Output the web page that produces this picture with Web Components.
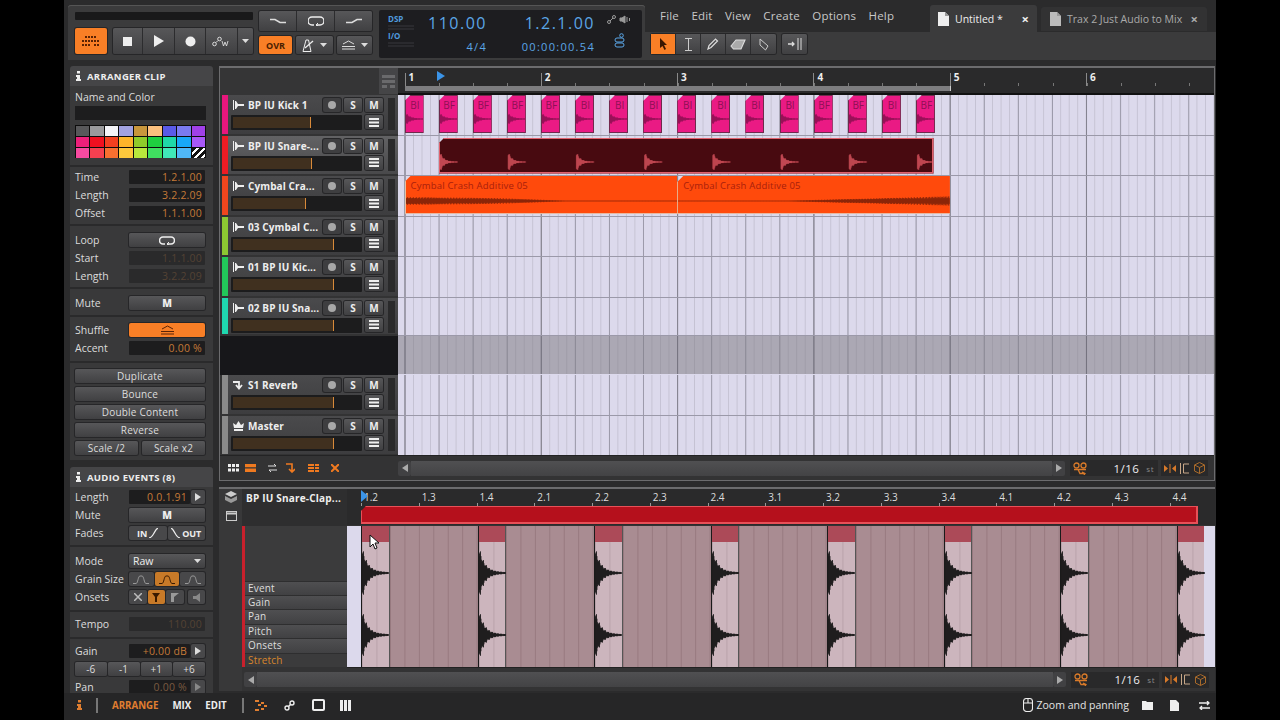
<!DOCTYPE html>
<html><head><meta charset="utf-8"><title>Bitwig</title>
<style>
html,body{margin:0;height:720px;overflow:hidden;background:#000;font-family:"Open Sans","Liberation Sans",sans-serif}
</style></head><body>
<daw-app>
  <daw-transport slot="transport"></daw-transport>
  <daw-menu slot="menu"></daw-menu>
  <daw-inspector slot="inspector">
    <insp-panel heading="ARRANGER CLIP">
      <insp-sec pad="2px 0 7px"><clip-color></clip-color></insp-sec>
      <insp-sec pad="1px 0 2px">
        <insp-row label="Time">1.2.1.00</insp-row><insp-row label="Length">3.2.2.09</insp-row><insp-row label="Offset">1.1.1.00</insp-row>
      </insp-sec>
      <insp-sec pad="5px 0 2px">
        <insp-row label="Loop" kind="btn"><svg width="16" height="9" viewBox="0 0 16 9" fill="none" stroke="#eee" stroke-width="1.6"><path d="M6 8H4a3.4 3.4 0 0 1 0-7h8a3.4 3.4 0 0 1 0 7H8"/><path d="M10 6l-2 2 2 1" stroke-width="1"/></svg></insp-row>
        <insp-row label="Start" kind="dim">1.1.1.00</insp-row><insp-row label="Length" kind="dim">3.2.2.09</insp-row>
      </insp-sec>
      <insp-sec pad="5px 0 3px"><insp-row label="Mute" kind="btn"><b>M</b></insp-row></insp-sec>
      <insp-sec pad="4px 0 4px">
        <insp-row label="Shuffle" kind="on"><svg width="15" height="10" viewBox="0 0 15 10" fill="none" stroke="#5a2408" stroke-width="1"><path d="M1 9h13M1 6.500h13M2 4l5.500-3L13 4"/></svg></insp-row>
        <insp-row label="Accent">0.00 %</insp-row>
      </insp-sec>
      <insp-sec pad="4px 0 3px">
        <insp-pair one><insp-action>Duplicate</insp-action></insp-pair><insp-pair one><insp-action>Bounce</insp-action></insp-pair><insp-pair one><insp-action>Double Content</insp-action></insp-pair><insp-pair one><insp-action>Reverse</insp-action></insp-pair>
        <insp-pair><insp-action>Scale /2</insp-action><insp-action>Scale x2</insp-action></insp-pair>
      </insp-sec>
    </insp-panel>
    <insp-panel heading="AUDIO EVENTS (8)">
      <insp-sec pad="1px 0 3px">
        <insp-row label="Length" kind="arrow">0.0.1.91</insp-row>
        <insp-row label="Mute" kind="btn"><b>M</b></insp-row>
        <insp-row label="Fades" kind="seg"><seg-btns items="fades"></seg-btns></insp-row>
      </insp-sec>
      <insp-sec pad="5px 0 4px">
        <insp-row label="Mode" kind="select">Raw</insp-row>
        <insp-row label="Grain Size" kind="seg"><seg-btns items="grain"></seg-btns></insp-row>
        <insp-row label="Onsets" kind="seg"><seg-btns items="onsets"></seg-btns></insp-row>
      </insp-sec>
      <insp-sec pad="3px 0 4px"><insp-row label="Tempo" kind="dim">110.00</insp-row></insp-sec>
      <insp-sec pad="3px 0 0">
        <insp-row label="Gain" kind="arrow">+0.00 dB</insp-row>
        <insp-pair four><insp-action>-6</insp-action><insp-action>-1</insp-action><insp-action>+1</insp-action><insp-action>+6</insp-action></insp-pair>
        <insp-row label="Pan" kind="arrowdim">0.00 %</insp-row>
      </insp-sec>
    </insp-panel>
  </daw-inspector>
  <daw-arranger slot="arranger">
    <track-row color="#e8177d" level="78" icon="wave" name="BP IU Kick 1"><kick-clips></kick-clips></track-row>
    <track-row color="#ee1c24" level="79" icon="wave" name="BP IU Snare-..." sel><snare-clip></snare-clip></track-row>
    <track-row color="#f0461e" level="73" icon="wave" name="Cymbal Cra..."><crash-clips></crash-clips></track-row>
    <track-row color="#8cc832" level="101" icon="wave" name="03 Cymbal C..."></track-row>
    <track-row color="#22c85a" level="101" icon="wave" name="01 BP IU Kic..."></track-row>
    <track-row color="#1fd8b0" level="101" icon="wave" name="02 BP IU Sna..." short></track-row>
    <track-row gap></track-row>
    <track-row color="#8a8a8a" level="101" icon="ret" name="S1 Reverb"></track-row>
    <track-row color="#8a8a8a" level="101" icon="crown" name="Master"></track-row>
  </daw-arranger>
  <daw-detail slot="detail"></daw-detail>
  <daw-status slot="status"></daw-status>
</daw-app>
<script>
const BTN=`background:linear-gradient(#575759,#404042);border-radius:2px;box-shadow:0 0 0 1px #262628;box-sizing:border-box;display:flex;align-items:center;justify-content:center;color:#eee;`;
const TXT=`font-family:"Open Sans","Liberation Sans",sans-serif;`;
function def(name,css,html){customElements.define(name,class extends HTMLElement{
  connectedCallback(){ if(this.shadowRoot) return; const r=this.attachShadow({mode:'open'});
    r.innerHTML=`<style>${css}</style>`+(typeof html==='function'?html(this):html); }
});}
const DD=`<svg width="7" height="4" viewBox="0 0 7 4"><path d="M0 0h7L3.500 4z" fill="#ddd"/></svg>`;
const DOC=c=>`<svg width="11" height="14" viewBox="0 0 11 14"><path d="M0 0h7l4 4v10H0z" fill="${c}"/><path d="M7 0v4h4z" fill="#999"/></svg>`;

def('daw-app',`:host{display:flex;flex-direction:column;width:1152px;height:720px;margin-left:64px;background:#2b2b2c;color:#eee;${TXT}font-size:11px}
 .h{display:flex;height:60px;flex:none}.m{display:flex;height:633px;flex:none;overflow:hidden}
 .c{display:flex;flex-direction:column;width:996px;margin:6px 0 0 6px;gap:6px}`,
 `<div class="h"><slot name="transport"></slot><slot name="menu"></slot></div>
  <div class="m"><slot name="inspector"></slot><div class="c"><slot name="arranger"></slot><slot name="detail"></slot></div></div>
  <slot name="status"></slot>`);

def('daw-transport',`:host{display:flex;width:577px;height:55px;margin:5px 0 0 4px;background:#3b3b3c;border-radius:3px 3px 0 0;box-shadow:inset 0 1px #555}
 .a{width:178px;margin:7px 0 0 7px}.slot{height:8px;background:#19191a;border-radius:1px}
 .r{display:flex;margin-top:8px;height:26px}
 .org{${BTN}width:32px;height:26px;background:#f97f26;margin-right:6px}
 .g{display:flex;flex:1;${BTN}justify-content:flex-start}
 .g i{display:flex;align-items:center;justify-content:center;height:100%;border-right:1px solid #2c2c2e;box-sizing:border-box}
 .b{width:113px;margin:6px 0 0 6px}.t{display:flex;height:20px;${BTN}justify-content:flex-start}
 .t i{flex:1;display:flex;align-items:center;justify-content:center;height:100%;border-right:1px solid #2c2c2e}
 .u{display:flex;margin-top:5px;height:18px;gap:4px}
 .ovr{${BTN}background:#f97f26;width:33px;font:700 9px "Open Sans";color:#4a1d00}
 .dd{${BTN}display:flex;justify-content:space-evenly}
 .d{display:flex;width:263px;height:48px;margin:5px 0 0 7px;background:#1d1d20;border-radius:2px;color:#5ba6e6;position:relative}
 .c1{width:38px;padding:4px 0 0 9px;box-sizing:border-box;font:700 8px/10px "Open Sans";color:#4f9adf}
 .c1 s{display:block;height:5px;width:26px;margin:1px 0;background:linear-gradient(#2a2a2e 2px,#1d1d20 2px,#1d1d20 3px,#2a2a2e 3px);text-decoration:none}
 .v{display:flex;flex-direction:column;align-items:flex-end;justify-content:flex-start}
 .big{font:400 16px/20px "Open Sans";letter-spacing:1.5px;margin-top:3px;height:22px}.sm{font:400 11px/14px "Open Sans";letter-spacing:1.3px;margin-top:5px}
 .ic{display:flex;flex-direction:column;margin-left:12px;gap:9px;padding-top:5px;align-items:center}`,
 `<div class="a"><div class="slot"></div><div class="r"><div class="org"><svg width="18" height="12" viewBox="0 0 18 12" fill="#5b2203"><path d="M3 1h2v2H3zM6 1h2v2H6zM9 1h2v2H9zM12 1h2v2h-2zM0 5h2v2H0zM3 5h2v2H3zM6 5h2v2H6zM9 5h2v2H9zM12 5h2v2h-2zM15 5h2v2h-2zM0 9h2v2H0zM3 9h2v2H3zM6 9h2v2H6zM12 9h2v2h-2zM15 9h2v2h-2z"/></svg></div>
  <div class="g"><i style="width:30px"><svg width="9" height="9"><rect width="9" height="9" fill="#eee"/></svg></i><i style="width:32px"><svg width="10" height="12"><path d="M0 0l10 6-10 6z" fill="#eee"/></svg></i><i style="width:31px"><svg width="11" height="11"><circle cx="5.500" cy="5.500" r="5" fill="#eee"/></svg></i>
  <i style="width:32px"><svg width="19" height="11" viewBox="0 0 19 11" fill="none" stroke="#ddd"><circle cx="2.500" cy="8" r="1.800"/><circle cx="7.500" cy="3" r="1.800"/><path d="M4 6.500L6 4.500"/><path d="M10 5l1.500 5 1.500-4 1.500 4 1.500-5" stroke-width=".9"/></svg></i><i style="flex:1;border:0">${DD}</i></div></div></div>
  <div class="b"><div class="t"><i><svg width="16" height="6"><path d="M0 1.500h5l5 3h6" stroke="#ddd" stroke-width="1.500" fill="none"/></svg></i><i><svg width="16" height="10" viewBox="0 0 16 10" fill="none" stroke="#eee" stroke-width="1.500"><path d="M6 9H4a3.700 3.700 0 0 1 0-8h8a3.700 3.700 0 0 1 0 8H8"/><path d="M10 7L8 9l2 1" stroke-width="1"/></svg></i><i style="border:0"><svg width="16" height="6"><path d="M0 4.500h6l5-3h5" stroke="#ddd" stroke-width="1.500" fill="none"/></svg></i></div>
  <div class="u"><div class="ovr">OVR</div><div class="dd" style="width:37px"><svg width="13" height="13" viewBox="0 0 13 13" fill="none" stroke="#eee"><path d="M1 12.500h8L6.500 1h-2.500z"/><path d="M3 9L11 2" stroke-width="1.300"/></svg>${DD}</div><div class="dd" style="width:35px"><svg width="15" height="10" viewBox="0 0 15 10" fill="none" stroke="#ddd"><path d="M1 9h13M1 6.500h13M2 4l5.500-3L13 4"/></svg>${DD}</div></div></div>
  <div class="d"><div class="c1">DSP<s></s>I/O<s></s></div>
   <div class="v" style="width:70px"><div class="big">110.00</div><div class="sm">4/4</div></div>
   <div class="v" style="width:108px"><div class="big">1.2.1.00</div><div class="sm">00:00:00.54</div></div>
   <div class="ic"><svg width="24" height="9" viewBox="0 0 24 9" fill="none" stroke="#9a9a9a"><circle cx="2" cy="7" r="1.500"/><circle cx="7" cy="2" r="1.500"/><path d="M3 6l3-3"/><path d="M13 3h2l3-2v7l-3-2h-2zM20 2v5M22.500 3v3" fill="#9a9a9a"/></svg>
   <svg width="11" height="15" viewBox="0 0 11 15" fill="none" stroke="#5ba6e6"><circle cx="7.500" cy="2.500" r="1.800"/><rect x="1" y="5" width="9" height="4" rx="2"/><rect x="1" y="10" width="9" height="4" rx="2"/></svg></div>
  </div>`);

def('daw-menu',`:host{display:flex;flex-direction:column;width:571px;height:60px}
 .top{display:flex;height:32px;box-sizing:border-box}
 .mi{display:flex;gap:12.400px;padding:9px 0 0 15px;width:285px;box-sizing:border-box;color:#c8c8c8;font:500 11.5px/14px "Open Sans";letter-spacing:.2px}
 .tab{display:flex;align-items:center;box-sizing:border-box;border-radius:3px 3px 0 0;font:500 10.5px "Open Sans"}
 .t1{width:107px;height:27px;margin-top:5px;background:#3b3b3c;color:#eee;padding:0 8px}.t2{width:166px;height:24px;margin:7px 0 0 4px;background:#323233;color:#aaa;padding:0 9px}
 .tab svg{margin-right:6px;flex:none}.x{margin-left:auto;font-weight:700;font-size:13px}
 .tl{flex:1;background:#3b3b3c;display:flex;padding:2px 0 0 6px;gap:6px;box-sizing:border-box}
 .g{display:flex;height:20px;${BTN}}.g i{width:25px;height:20px;display:flex;align-items:center;justify-content:center;border-right:1px solid #2c2c2e;box-sizing:border-box}
 .g i.on{background:#f97f26}`,
 `<div class="top"><div class="mi"><span>File</span><span>Edit</span><span>View</span><span>Create</span><span>Options</span><span>Help</span></div>
  <div class="tab t1">${DOC('#eee')}Untitled *<span class="x">×</span></div><div class="tab t2">${DOC('#bbb')}Trax 2 Just Audio to Mix<span class="x">×</span></div></div>
  <div class="tl"><div class="g"><i class="on"><svg width="9" height="12"><path d="M1 0l7 7H5l2 4-1.500 1L3.500 8 1 10z" fill="#3a1500"/></svg></i><i><svg width="7" height="13" fill="none" stroke="#ccc"><path d="M0 .5h7M0 12.500h7M3.500 .5v12"/></svg></i><i><svg width="12" height="12" fill="none" stroke="#ddd" stroke-width="1.200"><path d="M1 11l1-3.500L8.500 1l2 2L4 9.500z"/></svg></i><i><svg width="16" height="11" fill="none" stroke="#ddd" stroke-width="1.100"><path d="M1 7l5-6h9l-4 9H3.500z" fill="#aaa"/></svg></i><i style="border:0"><svg width="12" height="13" fill="none" stroke="#ccc"><path d="M2 1l8 7-2.500 4L2 7z"/></svg></i></div>
  <div class="g"><i style="border:0"><svg width="16" height="12" fill="none" stroke="#ddd"><path d="M1 6h6M5 4l2 2-2 2" stroke-width="1.300"/><path d="M11 0v12M14 0v12"/></svg></i></div></div>`);

def('daw-inspector',`:host{display:flex;width:143px;margin:6px 0 0 6px;flex:none;flex-direction:column;gap:7px}`,`<slot></slot>`);
def('insp-panel',`:host{display:block;background:#2a2a2b;border-radius:3px}
 .h{height:20px;background:#454547;border-radius:3px 3px 0 0;display:flex;align-items:center;padding-left:6px;gap:6px;font:700 9.500px "Open Sans";color:#eee;letter-spacing:.3px}
 .b{display:flex;flex-direction:column;gap:2px}`,
 h=>`<div class="h"><svg width="5" height="10" fill="#eee"><rect x="1" width="3" height="2.500"/><path d="M0 4h4v4h1v2H0V8h1V6H0z"/></svg>${h.getAttribute('heading')}</div><div class="b"><slot></slot></div>`);
def('insp-sec',`:host{display:block;background:#39393a}`,h=>`<div style="padding:${h.getAttribute('pad')}"><slot></slot></div>`);
def('insp-row',`:host{display:flex;height:18px;align-items:center;padding:0 8px 0 5px}
 .l{flex:1;color:#dcdcdc;font:500 10.500px "Open Sans";white-space:nowrap}
 .f{width:76px;height:14px;background:#1d1d1e;color:#c47a38;font:500 10.5px/14px "Open Sans";text-align:right;padding-right:3px;box-sizing:border-box;border-radius:1px;letter-spacing:.2px}
 .dim{color:#544234;background:#2a2a2b}
 .btn{${BTN}width:76px;height:14px;font:700 10px "Open Sans"}
 .on{${BTN}width:76px;height:14px;background:#f97f26}
 .sel{${BTN}width:76px;height:14px;justify-content:space-between;padding:0 4px;font:500 10.5px "Open Sans"}
 .seg{width:76px;height:14px;display:block}
 .a{display:flex;width:76px;gap:1px}.a .f{flex:1;width:auto}.a .p{${BTN}width:14px;height:14px;background:#48484a}`,
 h=>{const k=h.getAttribute('kind')||'';const l=`<span class="l">${h.getAttribute('label')}</span>`;
  if(k==='btn')return l+`<div class="btn"><slot></slot></div>`;
  if(k==='on')return l+`<div class="on"><slot></slot></div>`;
  if(k==='seg')return l+`<div class="seg"><slot></slot></div>`;
  if(k==='select')return l+`<div class="sel"><slot></slot>${DD}</div>`;
  if(k==='dim')return l+`<div class="f dim"><slot></slot></div>`;
  if(k==='arrow'||k==='arrowdim')return l+`<div class="a"><div class="f" style="${k==='arrowdim'?'color:#7a5a40':''}"><slot></slot></div><div class="p"><svg width="6" height="8"><path d="M0 0l6 4-6 4z" fill="${k==='arrow'?'#ddd':'#888'}"/></svg></div></div>`;
  return l+`<div class="f"><slot></slot></div>`;});
def('insp-action',`:host{display:flex;flex:1;height:14px;${BTN}font:500 10px "Open Sans";color:#ddd;letter-spacing:.2px}`,`<slot></slot>`);
def('insp-pair',`:host{display:flex;gap:4px;height:14px;padding:2px 8px 2px 5px}:host([four]){gap:1px}`,`<slot></slot>`);
def('clip-color',`:host{display:block;padding:0 7px 0 5px}
 .t{font:500 10.500px/18px "Open Sans";color:#dcdcdc}.i{height:14px;background:#1d1d1e;margin-bottom:5px}
 .p{display:grid;grid-template-columns:repeat(9,1fr);grid-auto-rows:10px;gap:1px;padding:1px;background:#0c0c0c;height:33px;box-sizing:border-box}
 .z{background:repeating-linear-gradient(135deg,#111 0 3px,#fff 3px 5px)}`,
 ()=>{const c="#58585a #9a9a9c #f4f4f8 #a2a2e0 #c8963c #fcc07e #5a5ae8 #7a7af0 #a040e8 #ee1f7a #f01020 #f24020 #fdb52a #8fcc2a #1fd040 #1fd8a8 #18a8f8 #a858f8 #f84aa0 #f54050 #f87030 #fdc83c #b8e83c #40e060 #40e8b8 #50b8f8 z".split(' ');
  return `<div class="t">Name and Color</div><div class="i"></div><div class="p">${c.map(x=>x==='z'?'<div class="z"></div>':`<div style="background:${x}"></div>`).join('')}</div>`;});
def('seg-btns',`:host{display:flex;height:14px;gap:1px}
 i{flex:1;height:14px;${BTN}background:#48484a;font:700 9px "Open Sans";font-style:normal;gap:2px}i.on{background:#c87a28}`,
 h=>{const t=h.getAttribute('items');const gr=c=>`<svg width="16" height="9" fill="none" stroke="${c}"><path d="M0 8.500h3C5 8.500 5 1 7 1h2c2 0 2 7.500 4 7.500h3"/></svg>`;
  if(t==='fades')return `<i>IN <svg width="9" height="10" fill="none" stroke="#eee" stroke-width="1.300"><path d="M0 10C5 9 5 2 9 0"/></svg></i><i><svg width="9" height="10" fill="none" stroke="#eee" stroke-width="1.300"><path d="M0 0C4 2 4 9 9 10"/></svg>OUT</i>`;
  if(t==='grain')return `<i>${gr('#999')}</i><i class="on">${gr('#3a1a00')}</i><i>${gr('#999')}</i>`;
  return `<i><svg width="8" height="8" stroke="#bbb" stroke-width="1.500"><path d="M0 0l8 8M8 0L0 8"/></svg></i><i class="on"><svg width="8" height="9"><path d="M0 0h8L5 4v5H3V4z" fill="#3a1a00"/></svg></i><i><svg width="8" height="9"><path d="M0 0h8L3 4v5H0z" fill="#999"/></svg></i><i style="margin-left:3px"><svg width="7" height="9"><path d="M7 0v9L3 6H0V3h3z" fill="#888"/></svg></i>`;});

const LANE=`background-color:#dcd9ec;background-image:linear-gradient(90deg,#85838f 1px,transparent 1px),linear-gradient(90deg,#9b99a9 1px,transparent 1px),linear-gradient(90deg,#c5c2d3 1px,transparent 1px);background-size:136.3px 100%,34.08px 100%,8.52px 100%;background-position:6.5px 0;`;
def('daw-arranger',`:host{display:flex;flex-direction:column;height:415px;flex:none;box-sizing:border-box;border:1px solid #6c6c6e;border-width:2px 1px 1px;background:#2c2c2d;position:relative}
 .top{display:flex;height:27px;flex:none}
 .sp{width:178px;box-sizing:border-box;display:flex;justify-content:flex-end;background:#353536}
 .sp i{width:19px;height:26px;background:#454547;display:flex;align-items:center;justify-content:center}
 .ru{flex:1;border-bottom:2px solid #111;box-sizing:border-box;padding-left:6.500px;background:#2a2a2b;position:relative;display:flex;flex-direction:column;overflow:hidden}
 .n{display:flex;height:18px;flex:none;background-image:repeating-linear-gradient(90deg,#777 0 1px,transparent 1px 34.08px);background-size:100% 3px;background-repeat:no-repeat;background-position:0 100%}
 .n b{width:136.300px;flex:none;padding-left:4px;box-sizing:border-box;font:700 10px/18px "Open Sans";color:#eee;background:linear-gradient(#8a8a8a,#8a8a8a) 0 5px/1px 13px no-repeat}
 .lp{width:545px;height:5px;background:#7d7d7f;flex:none;border-right:1px solid #ccc}
 .pl{position:absolute;left:39px;top:3px}
 .rows{display:flex;flex-direction:column;flex:1;min-height:0}
 .bot{display:flex;align-items:center;height:24px;flex:none;background:#333334;border-top:1px solid #232324}
 .tb{display:flex;width:178px;height:100%;align-items:center;box-sizing:border-box;padding-left:8px;flex:none}.tb svg{flex:none}`,
 ()=>`<div class="top"><div class="sp"><i><svg width="13" height="13" fill="#6a6a6c"><path d="M0 0h13v3H0zM0 5h13v3H0zM0 10h5v3H0zM8 10h5v3H8z"/></svg></i></div>
   <div class="ru"><div class="n">${[1,2,3,4,5,6].map(x=>`<b>${x}</b>`).join('')}</div><div class="lp"></div>
   <svg class="pl" width="8" height="10"><path d="M0 0l8 5-8 5z" fill="#3b94e8"/></svg></div></div>
  <div class="rows"><slot></slot></div>
  <div class="bot"><div class="tb"><svg width="11" height="8" fill="#eee"><path d="M0 0h3v3H0zM4 0h3v3H4zM8 0h3v3H8zM0 4.500h3v3H0zM4 4.500h3v3H4zM8 4.500h3v3H8z"/></svg>
    <svg style="margin-left:6px" width="11" height="8" fill="#f07a20"><path d="M0 0h11v3.300H0zM0 4.500h11V8H0z"/></svg>
    <svg style="margin-left:12px" width="9" height="8" stroke="#ddd" fill="none"><path d="M0 2h8M6 0l2 2M9 6H1M3 8L1 6"/></svg>
    <svg style="margin-left:9px" width="9" height="10" stroke="#f07a20" fill="none" stroke-width="1.600"><path d="M0 1h6v7M3 6l3 3 3-3"/></svg>
    <svg style="margin-left:13px" width="11" height="8" fill="#f07a20"><path d="M0 0h6v2H0zM7 0h4v2H7zM0 3h6v2H0zM7 3h4v2H7zM0 6h6v2H0zM7 6h4v2H7z"/></svg>
    <svg style="margin-left:12px" width="8" height="8" stroke="#f07a20" stroke-width="2"><path d="M0 0l8 8M8 0L0 8"/></svg></div>
   <zoom-bar></zoom-bar></div>`);
def('track-row',`:host{display:flex;height:40.500px;flex:none}:host([gap]){height:39px}:host([short]){height:38.500px}
 .hd{width:178px;flex:none;box-sizing:border-box;padding:0 0 2px 2px;background:#333334;display:flex}
 .gaph{width:178px;flex:none;background:#17171a}
 .st{width:6px;flex:none}.in{flex:1;background:linear-gradient(#4a4a4c,#3d3d3f);position:relative;display:grid;grid-template-columns:89px 18px 18px 18px;grid-template-rows:14px 16px;gap:3px 3px;padding:3px 0 0 3px;box-sizing:border-box}
 .sel{background:linear-gradient(#626264,#49494b)}
 .nm{display:flex;align-items:center;gap:4px;font:700 10px "Open Sans";color:#eee;white-space:nowrap;padding-left:2px;letter-spacing:.1px}
 .rc,.b{${BTN}height:14px;font:700 10px "Open Sans"}.rc{background:#3e3e40}.rc i{width:8px;height:8px;border-radius:50%;background:#a8a8a8}
 .v{grid-column:1/3;width:131px;height:15px;background:#1c1c1d;display:flex;border-radius:1px}.v i{display:block;background:#40301f;border-right:1px solid #d88a3a;margin:2px 0 2px 2px;box-sizing:border-box;height:11px}
 .b3{grid-column:4}.mt{position:absolute;left:160px;top:3px;width:7px;height:32px;background:#2a2a2b}
 .lane{flex:1;min-width:0;${LANE}border-bottom:1px solid #9b99a9;box-sizing:border-box;overflow:hidden}
 .band{background-color:#aba8b4;background-image:linear-gradient(90deg,#75737f 1px,transparent 1px),linear-gradient(90deg,#8b8995 1px,transparent 1px),linear-gradient(90deg,#9f9ca8 1px,transparent 1px);border-bottom:1px solid #dcd9ec}`,
 h=>{ if(h.hasAttribute('gap'))return `<div class="gaph"></div><div class="lane band"></div>`;
  const ic={wave:`<svg width="11" height="10" viewBox="0 0 11 10" fill="#eee" style="flex:none"><path d="M0 0h1v10H0zM2 1h1l2 3h6v2H5l-2 3H2z"/></svg>`,
   ret:`<svg width="11" height="10" viewBox="0 0 11 10" fill="none" stroke="#eee" stroke-width="1.800" style="flex:none"><path d="M0 2h6v6M3 5l3 3.500L9 5"/></svg>`,
   crown:`<svg width="11" height="10" viewBox="0 0 11 10" fill="#eee" style="flex:none"><path d="M0 2l3 2 2.500-4L8 4l3-2-1 5H1zM1 8h9v2H1z"/></svg>`}[h.getAttribute('icon')];
  return `<div class="hd"><div class="st" style="background:${h.getAttribute('color')}"></div><div class="in ${h.hasAttribute('sel')?'sel':''}">
   <div class="nm">${ic}<span>${h.getAttribute('name')}</span></div><div class="rc"><i></i></div><div class="b">S</div><div class="b">M</div>
   <div class="v"><i style="width:${h.getAttribute('level')}px"></i></div><div class="b b3"><svg width="10" height="9" fill="#eee"><path d="M0 0h10v2H0zM0 3.500h10v2H0zM0 7h10v2H0z"/></svg></div><div class="mt"></div></div></div>
   <div class="lane"><slot></slot></div>`;});

function envPath(w,cy,fn){let d='';for(let x=0;x<w;x+=0.5){const n=.65+.35*Math.abs(Math.sin(x*7.3)+Math.sin(x*3.1));const a=Math.max(.3,fn(x)*Math.min(1.1,n));d+=`M${x} ${(cy-a).toFixed(2)}V${(cy+a).toFixed(2)}`;}return d;}
const cut=n=>`clip-path:polygon(${n}px 0,100% 0,100% 100%,0 100%,0 ${n}px);`;
def('kick-clips',`:host{display:flex;gap:15.100px;padding-left:6.500px;height:39px}
 .c{width:19px;flex:none;height:38px;box-sizing:border-box;background:#ea1a84;border:1px solid #6e2a4c;${cut(6)}position:relative;overflow:hidden;font:500 10px/18px "Open Sans";color:#8e1054;text-align:center;padding-left:2px}
 svg{position:absolute;left:0;top:0}`,
 ()=>{const t="BI BF BF BF BF BI BI BI BI BI BI BI BF BF BI BF".split(' ');const p=envPath(19,23,x=>5.5*Math.exp(-x/4)+.5);
  return t.map(x=>`<div class="c">${x}<svg width="19" height="38"><path d="${p}" stroke="#7a0f48" stroke-width=".5"/></svg></div>`).join('');});
def('snare-clip',`:host{display:block;padding:2px 0 0 40.500px;height:39px;box-sizing:border-box}
 .c{width:495px;height:36px;box-sizing:border-box;background:#480a10;border:1px solid #e0606c;border-width:1px 2px 2px 1px;${cut(6)}}svg{display:block}`,
 ()=>{const p=envPath(18,23,x=>10*Math.exp(-x/3.5)+.5);let s='';for(let k=0;k<8;k++)s+=`<path transform="translate(${k*68.2} 0)" d="${p}" stroke="#f0606c" stroke-width=".5"/>`;
  return `<div class="c"><svg width="492" height="33">${s}</svg></div>`;});
def('crash-clips',`:host{display:flex;padding-left:6.500px;height:39px}
 .c{width:272.700px;height:38px;flex:none;box-sizing:border-box;background:#ff4a0c;border-bottom:1px solid #e8b8a0;border-left:1px solid #e8c0a0;${cut(6)}font:400 9.500px/16px "Open Sans";color:#a8200c;padding:2px 0 0 5px;position:relative;letter-spacing:.2px}
 svg{position:absolute;left:0;top:0}`,
 ()=>{const a=envPath(273,25,x=>x<90?3.500-x*.01:x<160?2.600-(x-90)*.033:.3);const b=envPath(272,25,x=>x<110?.3:.3+(x-110)*.024);
  return `<div class="c">Cymbal Crash Additive 05<svg width="273" height="38"><path d="${a}" stroke="#5c1808" stroke-width=".5"/></svg></div><div class="c">Cymbal Crash Additive 05<svg width="272" height="38"><path d="${b}" stroke="#5c1808" stroke-width=".5"/></svg></div>`;});

def('zoom-bar',`:host{display:flex;align-items:center;flex:1;height:100%;gap:0;padding-right:6px}
 .ar{${BTN}width:13px;height:15px;flex:none;background:#414143;box-shadow:none}
 .tr{flex:1;height:15px;background:linear-gradient(#505052,#434345)}
 .z{display:flex;align-items:center;height:16px;width:88px;margin-left:5px;background:#29292a;flex:none;padding:0 4px 0 3px;box-sizing:border-box;font:500 11.500px "Open Sans";color:#eee;letter-spacing:.5px}
 .z span{margin-left:auto}.z em{font:500 8px "Open Sans";color:#888;margin-left:7px}
 .t{display:flex;align-items:center;gap:4px;height:16px;margin-left:3px;background:#29292a;padding:0 3px;flex:none;width:47px;box-sizing:border-box}`,
 ()=>`<div class="ar"><svg width="6" height="8"><path d="M6 0L0 4l6 4z" fill="#aaa"/></svg></div><div class="tr"></div><div class="ar"><svg width="6" height="8"><path d="M0 0l6 4-6 4z" fill="#aaa"/></svg></div>
  <div class="z"><svg width="15" height="13" fill="none" stroke="#d87a2a" stroke-width="1.300"><circle cx="3.500" cy="3.500" r="2.500"/><circle cx="10.500" cy="3.500" r="2.500"/><path d="M1 7.500h12M5 7.500l2 4h5M9 10l3 1.500L11 13"/></svg><span>1/16</span><em>st</em></div>
  <div class="t"><svg width="12" height="9" fill="#d87a2a"><path d="M0 1l4 3.500L0 8zM12 1L8 4.500 12 8zM5.500 0h1v9h-1z"/></svg><svg width="10" height="11" fill="none" stroke="#c8a888"><path d="M.5 0v11M3.500 1v9M3.500 1H9M3.500 10H9"/></svg><svg width="11" height="12" fill="none" stroke="#a86a2a"><path d="M5.500 .5L10.500 3v6l-5 2.500L.5 9V3zM.5 3l5 2.500 5-2.500M5.500 5.500v6"/></svg></div>`);

def('daw-detail',`:host{display:flex;height:204px;flex:none;box-sizing:border-box;border-top:2px solid #6c6c6e;background:#333334;position:relative}
 .rail{width:23px;flex:none;display:flex;flex-direction:column;align-items:center;gap:8px;padding:2px 0 0 1px;box-sizing:border-box;background:#383839}
 .main{flex:1;display:flex;flex-direction:column;min-width:0}
 .up{display:flex;height:179px;flex:none}
 .lc{width:105px;flex:none;display:flex;flex-direction:column}
 .tt{height:37px;flex:none;background:#2e2e2f;font:700 10px/18px "Open Sans";color:#eee;padding-left:4px;letter-spacing:.2px;white-space:nowrap}
 .lb{flex:1;background:#3b3b3c;border-left:3px solid #c8202c;display:flex;flex-direction:column;justify-content:flex-end;margin-bottom:1px}
 .rc{flex:1;min-width:0;display:flex;flex-direction:column;position:relative}
 .ru{height:37px;flex:none;background:#2a2a2b;padding-left:14px;position:relative;border-bottom:1px solid #333;box-sizing:border-box}
 .lbls{display:flex;height:17px}.lbls b{width:57.750px;flex:none;font:500 10px/14px "Open Sans";color:#ddd;padding:1px 0 0 3px;box-sizing:border-box;background:linear-gradient(#999,#999) 0 100%/1px 3px no-repeat}
 .bar{width:837px;height:18px;background:#b5101c;border:1px solid #e85058;border-width:1px 2px 2px 1px;box-sizing:border-box;${cut(5)}}
 .pl{position:absolute;left:14px;top:1px}
 .wv{height:142px;flex:none;background:#dcd9ec;padding-left:14px;display:flex;position:relative;overflow:hidden;border-bottom:1px solid #222;box-sizing:border-box}
 .ev{width:27.500px;flex:none;background-color:#ccb5bd;background-image:linear-gradient(90deg,#b9a2aa 1px,transparent 1px);background-size:14.440px 100%;border-left:1px solid #1a1a1a;box-sizing:border-box;position:relative}
 .ev svg{position:absolute;left:0;top:0}.gp{width:88px;flex:none;background-color:#a98c92;background-image:linear-gradient(90deg,#97797f 1px,transparent 1px);background-size:14.440px 100%;border-left:1px solid #555}
 .ev u{display:block;height:16px;background:#ac4a58}
 .cur{position:absolute;top:8px;z-index:2;left:21.500px}
 .sc{display:flex;align-items:center;height:23px;padding-left:2px}`,
 ()=>{const a=envPath(27,47,x=>25*Math.exp(-x/5.500)+.7),b=envPath(27,109,x=>24*Math.exp(-x/5.500)+.7);
  const lab="1.2 1.3 1.4 2.1 2.2 2.3 2.4 3.1 3.2 3.3 3.4 4.1 4.2 4.3 4.4".split(' ');let ev='';
  for(let k=0;k<8;k++){ev+=`<div class="ev"><u></u><svg width="27" height="140"><path d="${a} ${b}" stroke="#111" stroke-width=".8"/></svg></div>`;if(k<7)ev+=`<div class="gp"></div>`;}
  const rows=[['Event'],['Gain'],['Pan'],['Pitch'],['Onsets'],['Stretch',1]];
  return `<div class="rail"><svg width="12" height="12" viewBox="0 0 12 12"><path d="M6 0l6 3-6 3-6-3z" fill="#ccc"/><path d="M0 5l6 3 6-3v4l-6 3-6-3z" fill="#999"/></svg><svg width="11" height="10" fill="none" stroke="#ccc"><rect x=".5" y=".5" width="10" height="9"/><path d="M1 2.500h9" stroke-width="2"/></svg></div>
  <div class="main"><div class="up"><div class="lc"><div class="tt">BP IU Snare-Clap...</div><div class="lb">${rows.map(r=>`<lane-label ${r[1]?'on':''}>${r[0]}</lane-label>`).join('')}</div></div>
  <div class="rc"><div class="ru"><div class="lbls">${lab.map(x=>`<b>${x}</b>`).join('')}</div><div class="bar"></div><svg class="pl" width="7" height="12"><path d="M0 0l7 6-7 6z" fill="#3b94e8"/></svg></div>
  <div class="wv">${ev}<svg class="cur" width="11" height="16" viewBox="0 0 11 16"><path d="M1 1v12l3-3 2 5 2-1-2-5h4z" fill="#fff" stroke="#111"/></svg></div></div></div>
  <div class="sc"><zoom-bar></zoom-bar></div></div>`;});
def('lane-label',`:host{display:block;height:14.400px;background:linear-gradient(#4f4f51,#414143);border-top:1px solid #2e2e2f;box-sizing:border-box;font:500 10px/13px "Open Sans";color:#ddd;padding-left:3px;letter-spacing:.2px}:host([on]){color:#d8862c;background:#3b3b3c}`,`<slot></slot>`);

def('daw-status',`:host{display:flex;align-items:center;height:27px;flex:none;background:#262627;font:700 9.700px "Open Sans";color:#eee;padding-left:13px;box-sizing:border-box;padding-bottom:3px}
 .s{width:2px;height:15px;background:#777;flex:none}.o{color:#e07e30}.r{margin-left:auto;display:flex;align-items:center;padding-right:6px}
 .z{font:500 10.500px "Open Sans";color:#e4e4e4;margin:0 13px 0 4px}`,
 `<svg width="5" height="10" fill="#e07e30"><rect x="1" width="3" height="2.500"/><path d="M0 4h4v4h1v2H0V8h1V6H0z"/></svg>
 <div class="s" style="margin:0 14px 0 14px"></div><span class="o">ARRANGE</span><span style="margin-left:14px">MIX</span><span style="margin-left:14px">EDIT</span>
 <div class="s" style="margin-left:15px"></div>
 <svg style="margin-left:11px" width="12" height="11" fill="#e07e30"><path d="M0 0h4v2H0zM6 2h3v2H6zM3 4h3v2H3zM9 5h3v2H9zM0 9h4v2H0zM6 8h3v2H6z"/></svg>
 <svg style="margin-left:17px" width="11" height="11" fill="none" stroke="#eee" stroke-width="1.400"><circle cx="3" cy="8" r="2"/><circle cx="8" cy="3" r="2"/><path d="M4.500 6.500l2-2"/></svg>
 <svg style="margin-left:17px" width="13" height="12" fill="none" stroke="#eee" stroke-width="2"><rect x="1" y="1" width="11" height="10" rx="1"/></svg>
 <svg style="margin-left:15px" width="11" height="11" fill="#eee"><path d="M0 0h3v11H0zM4 0h3v11H4zM8 0h3v11H8z"/></svg>
 <div class="r"><svg width="10" height="14" fill="none" stroke="#eee" stroke-width="1.100"><rect x=".5" y=".5" width="9" height="13" rx="3"/><path d="M5 1v4M1 5h8"/></svg><span class="z">Zoom and panning</span>
 <svg width="11" height="9" fill="#eee" style="margin-right:17px"><path d="M0 0h4l1 1h6v8H0z"/></svg><svg width="9" height="11" fill="#eee" style="margin-right:20px"><path d="M0 0h6l3 3v8H0z"/></svg>
 <svg width="11" height="9" stroke="#eee" fill="none" stroke-width="1.300"><path d="M0 2h10M8 0l2 2-2 2M11 7H1M3 5L1 7l2 2"/></svg></div>`);
</script>
</body></html>
